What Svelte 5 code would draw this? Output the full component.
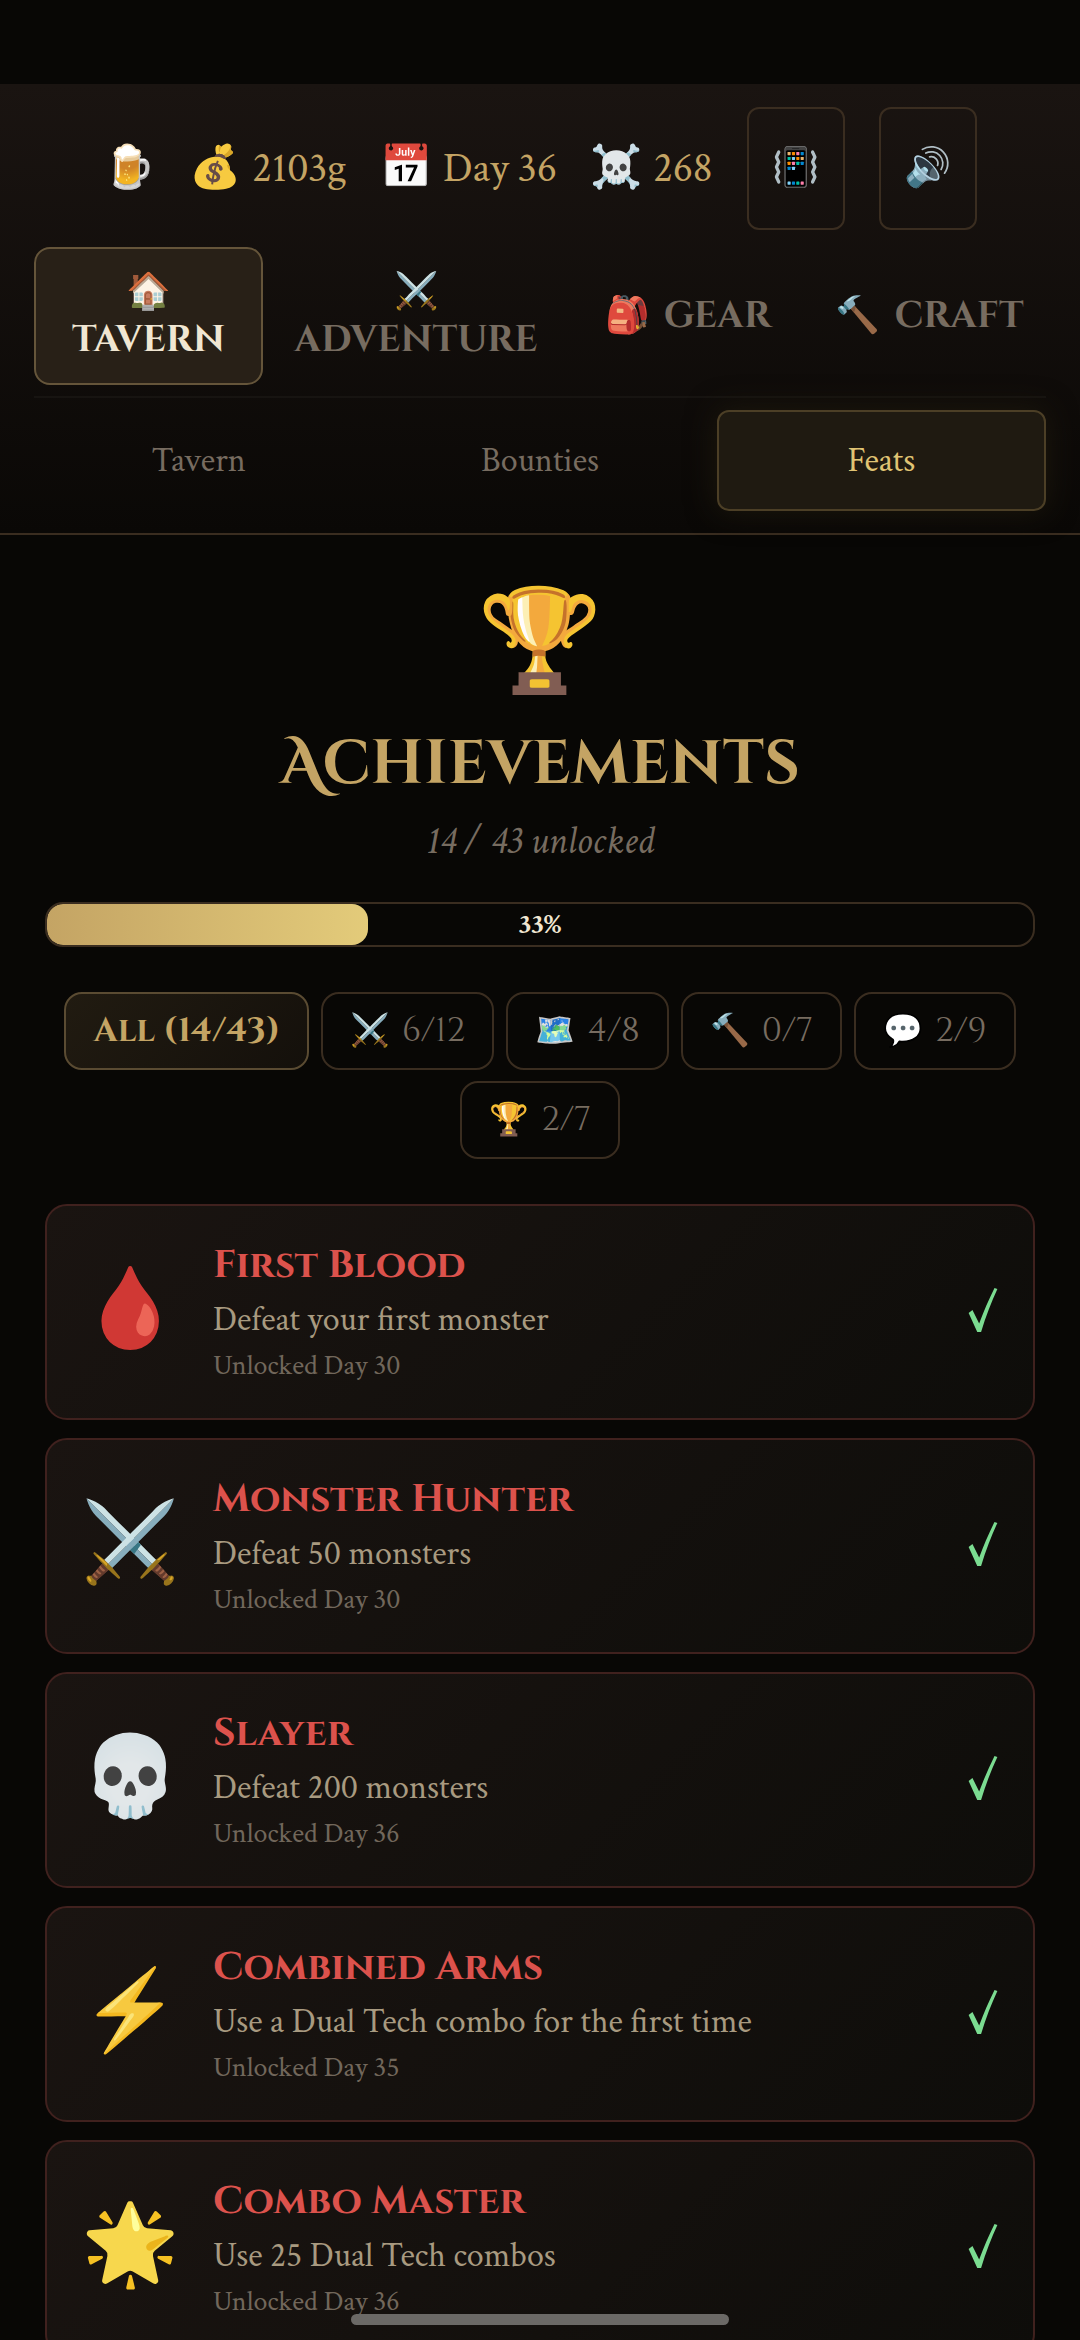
<script>
  const stats = [
    { icon: '🍺', value: '' },
    { icon: '💰', value: '2103g' },
    { icon: '📅', value: 'Day 36' },
    { icon: '☠️', value: '268' }
  ];

  const tabs = [
    { icon: '🏠', name: 'Tavern' },
    { icon: '⚔️', name: 'Adventure' },
    { icon: '🎒', name: 'Gear' },
    { icon: '🔨', name: 'Craft' }
  ];

  const subTabs = ['Tavern', 'Bounties', 'Feats'];

  const filters = [
    { icon: '⚔️', count: '6/12' },
    { icon: '🗺️', count: '4/8' },
    { icon: '🔨', count: '0/7' },
    { icon: '💬', count: '2/9' },
    { icon: '🏆', count: '2/7' }
  ];

  const achievements = [
    { icon: '🩸', title: 'First Blood', text: 'Defeat your first monster', day: 30 },
    { icon: '⚔️', title: 'Monster Hunter', text: 'Defeat 50 monsters', day: 30 },
    { icon: '💀', title: 'Slayer', text: 'Defeat 200 monsters', day: 36 },
    { icon: '⚡', title: 'Combined Arms', text: 'Use a Dual Tech combo for the first time', day: 35 },
    { icon: '🌟', title: 'Combo Master', text: 'Use 25 Dual Tech combos', day: 36 }
  ];

  const unlocked = 14;
  const total = 43;

  let activeTab = $state('Tavern');
  let activeSubTab = $state('Feats');
  let activeFilter = $state('all');
  let percent = $derived((unlocked / total) * 100);
</script>

<div class="app">
  <header>
    <div class="stats">
      {#each stats as stat}
        <span class="stat">
          <span class="emoji">{stat.icon}</span>
          {#if stat.value}<span>{stat.value}</span>{/if}
        </span>
      {/each}
      <button class="toggle" aria-label="Vibration">📳</button>
      <button class="toggle" aria-label="Sound">🔊</button>
    </div>

    <nav class="tabs">
      {#each tabs as tab}
        <button class="tab" class:active={activeTab === tab.name} onclick={() => (activeTab = tab.name)}>
          <span class="emoji">{tab.icon}</span>
          <span>{tab.name}</span>
        </button>
      {/each}
    </nav>

    <nav class="sub-tabs">
      {#each subTabs as name}
        <button class="sub-tab" class:active={activeSubTab === name} onclick={() => (activeSubTab = name)}>{name}</button>
      {/each}
    </nav>
  </header>

  <main>
    <div class="trophy">🏆</div>
    <h1>Achievements</h1>
    <p class="summary">{unlocked} / {total} unlocked</p>

    <div class="progress">
      <div class="fill" style="width: {percent}%"></div>
      <span>{Math.round(percent)}%</span>
    </div>

    <div class="filters">
      <button class="filter" class:active={activeFilter === 'all'} onclick={() => (activeFilter = 'all')}>All ({unlocked}/{total})</button>
      {#each filters as filter}
        <button class="filter" class:active={activeFilter === filter.icon} onclick={() => (activeFilter = filter.icon)}>
          <span class="emoji">{filter.icon}</span>
          <span>{filter.count}</span>
        </button>
      {/each}
    </div>

    <div class="list">
      {#each achievements as item}
        <article class="card">
          <div class="icon">{item.icon}</div>
          <div class="info">
            <h2>{item.title}</h2>
            <p class="text">{item.text}</p>
            <p class="day">Unlocked Day {item.day}</p>
          </div>
          <svg class="check" viewBox="0 0 32 48" aria-label="Unlocked">
            <path d="M1 27 L5 24 L12 38 C17 25 22 13 28 1 L31 2 C25 15 19 30 14 47 L10 47 Z" />
          </svg>
        </article>
      {/each}
    </div>
  </main>

  <div class="home-bar"></div>
</div>

<style>
:global(body) {
    margin: 0;
    background: #080705;
}

.app {
    --gold: #c4a464;
    --muted: #776c60;
    --line: #3a2d20;
    display: flex;
    flex-direction: column;
    height: 100vh;
    padding-top: 84px;
    box-sizing: border-box;
    overflow: hidden;
    font-family: "Crimson Text", "Liberation Serif", "Noto Color Emoji", serif;
    color: var(--gold);
}

button {
    margin: 0;
    padding: 0;
    border: 2px solid transparent;
    background: none;
    font: inherit;
    color: var(--muted);
    cursor: pointer;
}

header {
    padding: 23px 34px 22px;
    background: linear-gradient(180deg, #1a1411, #0a0806);
    border-bottom: 2px solid var(--line);
}

.emoji,
.trophy,
.icon {
    filter: saturate(85%);
}

.stats {
    display: flex;
    justify-content: center;
    align-items: center;
    gap: 34px;
    font-size: 42px;
}

.stat {
    display: flex;
    align-items: center;
    gap: 10px;
    white-space: nowrap;
}

.toggle {
    width: 98px;
    height: 123px;
    border-color: var(--line);
    border-radius: 12px;
    font-size: 38px;
}

.tabs {
    display: grid;
    grid-template-columns: 229fr 294fr 238fr 233fr;
    gap: 6px;
    margin-top: 17px;
    padding-bottom: 11px;
    border-bottom: 2px solid #171411;
}

.tab {
    display: flex;
    flex-wrap: wrap;
    justify-content: center;
    align-content: center;
    align-items: center;
    column-gap: 14px;
    height: 138px;
    padding: 0 16px;
    border-radius: 16px;
    font-family: "Cinzel", "Crimson Text", serif;
    font-size: 37px;
    font-weight: 600;
    line-height: 48px;
    text-transform: uppercase;
}

.tab .emoji {
    font-size: 36px;
}

.tab.active {
    background: #282017;
    border-color: #65553a;
    color: #f0e6d2;
}

.sub-tabs {
    display: grid;
    grid-template-columns: repeat(3, 1fr);
    gap: 12px;
    margin-top: 12px;
}

.sub-tab {
    height: 101px;
    border-radius: 12px;
    font-size: 34px;
}

.sub-tab.active {
    background: #1f1a11;
    border-color: #4c3f26;
    color: #e0c474;
    box-shadow: 0 0 30px #1d180d;
}

main {
    flex: 1;
    min-height: 0;
    padding: 45px;
    overflow-y: auto;
    scrollbar-width: none;
    text-align: center;
}

.trophy {
    font-size: 101px;
    line-height: 130px;
}

h1 {
    margin: 16px 0 0;
    font-family: "Cinzel Decorative", "Crimson Text", serif;
    font-size: 62px;
    line-height: 76px;
}

.summary {
    margin: 20px 0 40px;
    font-size: 39px;
    line-height: 40px;
    font-style: italic;
    color: var(--muted);
}

.progress {
    display: grid;
    height: 41px;
    border: 2px solid var(--line);
    border-radius: 18px;
    overflow: hidden;
}

.progress > * {
    grid-area: 1 / 1;
}

.progress span {
    place-self: center;
    font-size: 28px;
    font-weight: bold;
    color: #f0e6d2;
}

.fill {
    border-radius: 16px;
    background: linear-gradient(90deg, #c4a464, #e3cb7a);
}

.filters {
    display: flex;
    flex-wrap: wrap;
    justify-content: center;
    gap: 11px 12px;
    margin: 45px 0;
}

.filter {
    display: flex;
    align-items: center;
    gap: 12px;
    height: 78px;
    padding: 0 27px;
    border-color: var(--line);
    border-radius: 18px;
    font-family: "Cinzel", "Crimson Text", serif;
    font-size: 34px;
}

.filter .emoji {
    font-size: 32px;
}

.filter.active {
    background: linear-gradient(135deg, #211b11, #14100b);
    border-color: #5a4b32;
    color: var(--gold);
    font-weight: bold;
}

.list {
    display: grid;
    gap: 18px;
    text-align: left;
}

.card {
    display: flex;
    align-items: center;
    height: 216px;
    box-sizing: border-box;
    padding: 0 34px;
    border: 2px solid #40211e;
    border-radius: 22px;
    background: linear-gradient(135deg, #1a1411, #0e0d0a);
}

.icon {
    width: 96px;
    margin-right: 36px;
    font-size: 79px;
    line-height: 96px;
    text-align: center;
}

.info {
    flex: 1;
}

h2 {
    margin: 0;
    font-family: "Cinzel", "Crimson Text", serif;
    font-size: 39px;
    line-height: 52px;
    color: #dc524c;
}

.card p {
    margin: 0;
}

.text {
    font-size: 34px;
    line-height: 56px;
    color: #a89a80;
}

.day {
    font-size: 28px;
    line-height: 36px;
    color: #71675b;
}

.check {
    width: 32px;
    height: 46px;
    margin-bottom: 4px;
    fill: #7bdc91;
}

.home-bar {
    position: fixed;
    bottom: 15px;
    left: 50%;
    width: 35%;
    height: 11px;
    border-radius: 6px;
    background: #6b6966;
    transform: translateX(-50%);
}
</style>
